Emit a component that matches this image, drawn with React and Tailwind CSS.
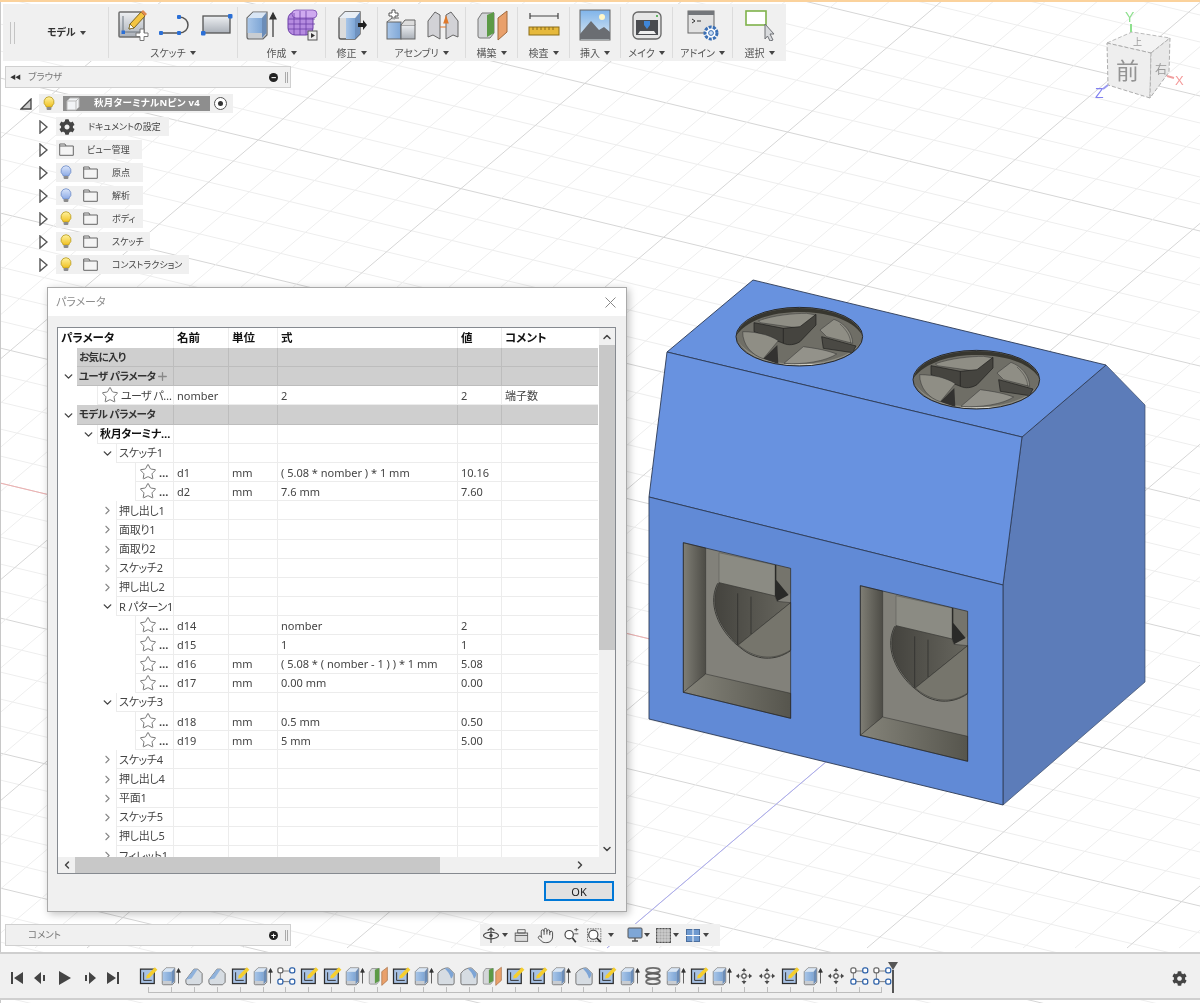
import React from "react";
import { ChevronDown, ChevronRight, ChevronLeft, ChevronUp, Star, Hand, Plus } from "lucide-react";
import { FaCog } from "react-icons/fa";

const Defs = () => (
  <svg className="absolute h-0 w-0">
    <defs>
      <linearGradient id="gBlue" x1="0" y1="0" x2="1" y2="0"><stop offset="0" stopColor="#a9c6e8" /><stop offset="1" stopColor="#7ea6d6" /></linearGradient>
      <linearGradient id="gGray" x1="0" y1="0" x2="0" y2="1"><stop offset="0" stopColor="#eef0f3" /><stop offset="1" stopColor="#aab0b8" /></linearGradient>
      <linearGradient id="gSky" x1="0" y1="0" x2="0" y2="1"><stop offset="0" stopColor="#7fb4ea" /><stop offset="1" stopColor="#dfeaf2" /></linearGradient>
      <linearGradient id="gWallL" x1="0" y1="0" x2="1" y2="0"><stop offset="0" stopColor="#7f7e75" /><stop offset="1" stopColor="#4d4c46" /></linearGradient>
      <linearGradient id="gFloor" x1="0" y1="0" x2="1" y2="0"><stop offset="0" stopColor="#85847a" /><stop offset="1" stopColor="#56554d" /></linearGradient>
      <linearGradient id="gDark" x1="0" y1="0" x2="1" y2="0"><stop offset="0" stopColor="#44433e" /><stop offset="1" stopColor="#67665e" /></linearGradient>
      <linearGradient id="gBulbY" x1="0" y1="0" x2="0" y2="1"><stop offset="0" stopColor="#fff3a0" /><stop offset="1" stopColor="#f0c020" /></linearGradient>
      <linearGradient id="gBulbB" x1="0" y1="0" x2="0" y2="1"><stop offset="0" stopColor="#dbe6fb" /><stop offset="1" stopColor="#8dabe6" /></linearGradient>
      <clipPath id="holeClip"><ellipse cx="418" cy="170" rx="188" ry="86" /></clipPath>
    </defs>
  </svg>
);

const gridA = Array.from({ length: 70 }, (_, i) => i - 30);
const gridB = Array.from({ length: 60 }, (_, i) => i - 30);

const Hole = () => (
  <g transform="translate(660 280) scale(.3333)">
    <ellipse cx="418" cy="170" rx="190" ry="88" fill="#6f6e66" />
    <g clipPath="url(#holeClip)">
      <path d="M232 178 C260 238 340 258 418 258 C500 258 590 232 604 178 C590 226 500 252 418 252 C340 252 260 230 232 178Z" fill="#8f8e84" />
      <path d="M370 254 C400 260 470 260 510 250 C470 254 410 256 370 254Z" fill="#dedcd2" stroke="#dedcd2" strokeWidth="3" />
      <path d="M226 170 C250 100 340 80 418 80 C500 80 590 105 610 170 C580 118 500 96 418 96 C340 96 262 118 226 170Z" fill="#37362f" />
      <path d="M296 122 C340 106 400 100 440 100 L468 105 L420 145 L300 128Z" fill="#8f8e85" stroke="#333" strokeWidth="1.5" />
      <path d="M282 128 L370 145 L420 140 L468 103 L468 135 L420 185 C405 195 385 197 370 190 L282 155Z" fill="#45443f" stroke="#1e1e1c" strokeWidth="2" />
      <path d="M370 145 V190" stroke="#1e1e1c" strokeWidth="2" />
      <path d="M480 150 L522 118 C555 130 578 160 578 190 L500 170Z" fill="#8f8e85" stroke="#333" strokeWidth="1.5" />
      <path d="M540 132 C560 150 572 170 572 190" fill="none" stroke="#3a3a36" strokeWidth="1.5" />
      <path d="M485 170 L588 198 L578 218 L490 205Z" fill="#4a4944" stroke="#1e1e1c" strokeWidth="2" />
      <path d="M248 155 C290 155 330 165 355 182 L310 236 C275 225 248 195 248 155Z" fill="#8f8e85" stroke="#333" strokeWidth="1.5" />
      <path d="M310 236 L352 195 L355 252Z" fill="#333230" />
      <path d="M372 250 L430 200 C470 205 505 212 530 222 C500 243 430 255 372 250Z" fill="#93928a" stroke="#333" strokeWidth="1.5" />
    </g>
    <ellipse cx="418" cy="170" rx="190" ry="88" fill="none" stroke="#26282c" strokeWidth="3" />
  </g>
);

const Win = () => (
  <g transform="translate(640 530) scale(.3333)">
    <path d="M130 38 L452 115 V565 L130 487Z" fill="#82817a" />
    <path d="M130 38 L197 54 V432 L130 487Z" fill="url(#gWallL)" stroke="#2d2d2a" strokeWidth="1.5" />
    <path d="M130 487 L197 432 L452 490 V565Z" fill="url(#gFloor)" stroke="#2d2d2a" strokeWidth="1.5" />
    <path d="M237 68 L405 105 V198 L237 158Z" fill="#8b8b83" stroke="#55554f" strokeWidth="1.5" />
    <path d="M405 105 V198 L411 212 L452 190 V115Z" fill="#75746c" />
    <path d="M405 105 H409 V150 L446 195 L411 214 L405 198Z" fill="#2a2a28" />
    <path d="M237 158 L405 198 L411 214 L452 218 L295 345 C250 305 200 230 237 158Z" fill="url(#gDark)" stroke="#2d2d2a" strokeWidth="1.5" />
    <path d="M295 345 L452 218 V360 C400 395 340 385 295 345Z" fill="#76756c" stroke="#2d2d2a" strokeWidth="1.5" />
    <path d="M293 190 V345 M333 200 V312" stroke="#2a2a28" strokeWidth="2" fill="none" />
    <path d="M233 160 C195 235 255 320 300 352 C345 392 405 395 452 362" stroke="#3a3a36" strokeWidth="3" fill="none" />
    <path d="M130 38 L452 115 V565 L130 487Z" fill="none" stroke="#22252b" strokeWidth="2" />
  </g>
);

const Scene = () => (
  <svg className="absolute inset-0 -z-10" width="1200" height="1003" viewBox="0 0 1200 1003">
    {gridA.map((k) => {
      const y0 = 483 + k * 27;
      return <line key={"a" + k} x1="0" y1={y0} x2="1200" y2={y0 + 288} stroke={k % 5 === 0 ? "#d6d6d6" : "#eeeeee"} strokeWidth="1" />;
    })}
    {gridB.map((k) => {
      const x0 = 607 + k * 52;
      return <line key={"b" + k} x1={x0} y1="948" x2={x0 + 1116} y2="0" stroke={k % 5 === 0 ? "#d6d6d6" : "#eeeeee"} strokeWidth="1" />;
    })}
    <line x1="0" y1="483" x2="900" y2="699" stroke="#efb0b0" />
    <line x1="607" y1="948" x2="900" y2="699" stroke="#aaaaf0" />
    <line x1=".5" y1="0" x2=".5" y2="1003" stroke="#c8c8c8" />
    <path d="M1022 437 L1106 365 L1145 405 V682 L1003 805 V585Z" fill="#5c7cb9" stroke="#3a4a68" strokeWidth=".7" />
    <path d="M753 280 L1106 365 L1022 437 L667 352Z" fill="#6892df" stroke="#2c3a55" strokeWidth=".9" />
    <path d="M667 352 L1022 437 L1003 585 L649 497Z" fill="#6892e0" stroke="#2c3a55" strokeWidth=".9" />
    <path d="M649 497 L1003 585 V805 L649 719Z" fill="#618ad6" stroke="#2c3a55" strokeWidth=".9" />
    <Hole />
    <g transform="translate(177 43)"><Hole /></g>
    <Win />
    <g transform="translate(177 43)"><Win /></g>
    <g>
      <path d="M1107 43 L1132 32 L1170 38 L1151 53Z" fill="#f3f3f3" stroke="#bbbbbb" strokeDasharray="4 2" />
      <path d="M1107 43 L1151 53 L1150 98 L1108 85Z" fill="#eeeeee" stroke="#adadad" strokeDasharray="4 2" />
      <path d="M1151 53 L1170 38 L1169 72 L1150 98Z" fill="#e9e9e9" stroke="#adadad" strokeDasharray="4 2" />
      <line x1="1131" y1="32" x2="1131" y2="24" stroke="#8ee08e" strokeWidth="2" />
      <line x1="1167" y1="76" x2="1174" y2="78" stroke="#f0a0a0" strokeWidth="2" />
      <line x1="1108" y1="85" x2="1103" y2="89" stroke="#9a9af0" strokeWidth="2" />
      <text x="1125" y="22" fontSize="14" fill="#8ee08e" fontFamily="Liberation Sans">Y</text>
      <text x="1175" y="85" fontSize="13" fill="#f59a9a" fontFamily="Liberation Sans">X</text>
      <text x="1095" y="98" fontSize="14" fill="#8080f0" fontFamily="Liberation Sans">Z</text>
      <text x="1116" y="79" fontSize="23" fill="#949494" fontFamily="Noto Sans CJK JP">前</text>
      <text x="1155" y="74" fontSize="12" fill="#9a9a9a" fontFamily="Noto Sans CJK JP">右</text>
      <text x="1133" y="45" fontSize="9" fill="#9a9a9a" fontFamily="Noto Sans CJK JP">上</text>
    </g>
  </svg>
);

const Ico = ({ s = 32, className = "", children }) => (
  <svg width={s} height={s} viewBox="0 0 32 32" className={"shrink-0 " + className}>{children}</svg>
);

const SketchNew = () => (
  <Ico>
    <rect x="2" y="3" width="25" height="25" rx="1" fill="url(#gGray)" stroke="#6d6d6d" strokeWidth="1.5" />
    <path d="M6 7 V23 H24" fill="none" stroke="#6d7680" strokeWidth="1" />
    <rect x="4.5" y="21.5" width="3.5" height="3.5" fill="#2a6fd6" />
    <path d="M12 20 L13 15 L24 3 L28 7 L17 19Z" fill="#f4c542" stroke="#7a6420" strokeWidth="1" />
    <path d="M12 20 L13 15 L17 19Z" fill="#fff" stroke="#7a6420" strokeWidth=".8" />
    <path d="M24 3 L28 7 L30 5 L26 1Z" fill="#e08a50" />
    <path d="M23 20 h4 v4 h4 v3.5 h-4 v4 h-4 v-4 h-4 v-3.5 h4Z" fill="#fff" stroke="#777" strokeWidth="1" />
  </Ico>
);
const ArcLine = () => (
  <Ico>
    <path d="M2 24 H20 M20 8 C32 8 32 24 20 24" fill="none" stroke="#555" strokeWidth="1.5" />
    <rect x="0" y="22" width="4" height="4" rx="1" fill="#2a6fd6" /><rect x="18" y="22" width="4" height="4" rx="1" fill="#2a6fd6" /><rect x="18" y="6" width="4" height="4" rx="1" fill="#2a6fd6" />
  </Ico>
);
const RectIcon = () => (
  <Ico>
    <rect x="2" y="7" width="27" height="17" fill="url(#gGray)" stroke="#555" strokeWidth="1.3" />
    <rect x="0" y="22" width="4.5" height="4.5" rx="1" fill="#2a6fd6" /><rect x="27" y="5" width="4.5" height="4.5" rx="1" fill="#2a6fd6" />
  </Ico>
);
const Extrude = ({ s = 32 }) => (
  <Ico s={s}>
    <path d="M2 9 L8 3 H22 V26 L18 30 H4 Q2 30 2 28Z" fill="#c9cdd2" stroke="#666" strokeWidth="1.2" />
    <path d="M2.6 9 H17 V24 H2.6Z" fill="url(#gBlue)" />
    <path d="M2.6 9 L8 3.6 H21.5 L17 9Z" fill="#d9e6f5" />
    <path d="M17 9 L21.5 3.6 V24 L17 29Z" fill="#6c8db8" />
    <path d="M28 28 V6 M25 10 L28 4 L31 10Z" stroke="#333" strokeWidth="1.2" fill="#333" />
  </Ico>
);
const Form = () => (
  <Ico>
    <rect x="1" y="3" width="25" height="23" rx="7" fill="#b58be0" stroke="#6d3fa8" />
    <rect x="5" y="1" width="25" height="8" rx="4" fill="#cfaaf0" stroke="#6d3fa8" strokeWidth=".7" />
    <path d="M7 4 V26 M13 2 V26 M19 2 V26 M1 10 H28 M1 15 H28 M1 20 H26" stroke="#6d3fa8" strokeWidth=".8" />
    <rect x="21" y="22" width="9" height="9" fill="#eee" stroke="#555" />
    <path d="M24 24 L28 26.5 L24 29Z" fill="#333" />
  </Ico>
);
const Modify = () => (
  <Ico>
    <path d="M3 9 L9 3 H24 V25 L19 30 H5 Q3 30 3 28Z" fill="#dcdcdc" stroke="#555" strokeWidth="1.3" />
    <path d="M10 9 H19 V30 H10Z" fill="url(#gBlue)" />
    <path d="M19 9 L24 3 V25 L19 30Z" fill="#6f92bf" />
    <path d="M9 3 L3 9 H19 L24 3Z" fill="#e8eef5" />
    <path d="M22 14 H27 V11 L31 16 L27 21 V18 H22Z" fill="#222" />
  </Ico>
);
const Assembly = () => (
  <Ico>
    <path d="M7 1 h3 v3 h3 v3 h-3 v3 h-3 v-3 h-3 v-3 h3Z" fill="#fff" stroke="#555" />
    <rect x="2" y="13" width="14" height="17" fill="url(#gBlue)" stroke="#666" />
    <rect x="16" y="16" width="14" height="14" fill="url(#gGray)" stroke="#666" />
    <path d="M2 13 L7 9 H14 M16 16 L20 11 H30 V16" fill="#ddd" stroke="#666" />
  </Ico>
);
const Joint = () => (
  <Ico>
    <path d="M1 12 L8 3 L13 6 V30 L6 26 L1 28Z" fill="#d2d2d6" stroke="#666" />
    <path d="M31 12 L24 3 L19 6 V30 L26 26 L31 28Z" fill="#d2d2d6" stroke="#666" />
    <path d="M13 18 H19 M19 8 L17 14 H21Z" stroke="#e0792a" fill="#e0792a" strokeWidth="1.2" />
  </Ico>
);
const Construct = ({ s = 32 }) => (
  <Ico s={s}>
    <path d="M2 10 L6 4 H18 V24 L14 29 H4 Q2 29 2 27Z" fill="#d4d6d9" stroke="#777" />
    <path d="M11 6 L18 3 V24 L11 28Z" fill="#5c9a47" />
    <path d="M22 9 L31 2 V23 L22 31Z" fill="#e9a06b" stroke="#a0683c" />
  </Ico>
);
const Ruler = () => (
  <Ico>
    <path d="M2 7 H30 M2 4 V10 M30 4 V10" stroke="#444" strokeWidth="1.2" />
    <rect x="1" y="18" width="30" height="8" fill="#e6b93c" stroke="#8a6c18" />
    <path d="M5 18 v3 M9 18 v3 M13 18 v3 M17 18 v3 M21 18 v3 M25 18 v3" stroke="#8a6c18" />
  </Ico>
);
const Insert = () => (
  <Ico>
    <rect x="1" y="1" width="30" height="30" fill="url(#gSky)" stroke="#666" />
    <circle cx="23" cy="8" r="3" fill="#fff7c8" />
    <path d="M1 30 V25 L12 12 L20 21 L25 18 L31 23 V30Z" fill="#6a6d72" />
  </Ico>
);
const Make = () => (
  <Ico>
    <rect x="2" y="3" width="28" height="27" rx="5" fill="#e6e6e6" stroke="#666" strokeWidth="1.3" />
    <rect x="5" y="11" width="22" height="15" fill="#4a4c50" />
    <path d="M13 12 H19 V16 L16 20 L13 16Z" fill="#3f86d8" />
    <path d="M9 22 H23 L25 25 H7Z" fill="#eee" />
    <circle cx="26" cy="7" r="1" fill="#35a535" />
  </Ico>
);
const AddIn = () => (
  <Ico>
    <rect x="1" y="2" width="26" height="22" fill="#e2e2e2" stroke="#666" />
    <rect x="1" y="2" width="26" height="4" fill="#73767a" />
    <path d="M5 10 L8 12 L5 14 M10 12 H14" stroke="#333" fill="none" />
    <circle cx="24" cy="24" r="6" fill="#fff" stroke="#3a6fb5" strokeWidth="3" strokeDasharray="3 1.2" />
    <circle cx="24" cy="24" r="2.4" fill="#cfe0f5" stroke="#3a6fb5" />
  </Ico>
);
const Select = () => (
  <Ico>
    <rect x="2" y="2" width="20" height="14" fill="#fff" stroke="#7fb24a" strokeWidth="1.6" />
    <path d="M21 15 L30 25 H26 L29 31 L26 32 L23.5 27 L21 30Z" fill="#d8dadd" stroke="#6e7075" />
  </Ico>
);

const TSketch = () => (
  <Ico s={20}>
    <rect x="4" y="5" width="22" height="23" fill="#a8c2e4" stroke="#2c2c2c" strokeWidth="2" />
    <path d="M9 10 V23 H22" fill="none" stroke="#2c2c2c" strokeWidth="1.5" />
    <path d="M13 20 L14 15 L27 2 L31 6 L18 19Z" fill="#f6cf2e" />
  </Ico>
);
const TChamfer = () => (
  <Ico s={20}>
    <path d="M3 22 L16 5 H22 L29 12 V26 L25 30 H7 Q3 30 3 26Z" fill="#d6dce2" stroke="#707070" strokeWidth="1.5" />
    <path d="M3 22 L16 5 H22 L12 20Z" fill="#8fb2dc" />
  </Ico>
);
const TFillet = () => (
  <Ico s={20}>
    <path d="M3 12 C8 4 16 3 20 3 L29 12 V27 Q29 30 26 30 H6 Q3 30 3 27Z" fill="#d6dce2" stroke="#707070" strokeWidth="1.5" />
    <path d="M14 4 C18 3 22 4 28 12 C27 17 26 19 24 20 C22 12 18 8 14 4Z" fill="#7da5d6" />
  </Ico>
);
const TPattern = () => (
  <Ico s={20}>
    <path d="M9 8 H24 M9 25 H24 M7 10 V23" stroke="#777" strokeWidth="1.5" fill="none" />
    <rect x="3" y="3" width="8" height="8" rx="3" fill="#fff" stroke="#666" strokeWidth="2" />
    <rect x="22" y="3" width="8" height="8" rx="3" fill="#fff" stroke="#2a5fa8" strokeWidth="2" />
    <rect x="3" y="21" width="8" height="8" rx="3" fill="#fff" stroke="#2a5fa8" strokeWidth="2" />
    <rect x="22" y="21" width="8" height="8" rx="3" fill="#fff" stroke="#2a5fa8" strokeWidth="2" />
  </Ico>
);
const TMove = () => (
  <Ico s={20}>
    <circle cx="16" cy="16" r="3.5" fill="#fff" stroke="#555" strokeWidth="2" />
    <path d="M16 3 L12 8 H20Z M16 29 L12 24 H20Z M3 16 L8 12 V20Z M29 16 L24 12 V20Z" fill="#4a4a4a" />
    <path d="M16 8 V12 M16 20 V24 M8 16 H12 M20 16 H24" stroke="#555" strokeWidth="1.5" strokeDasharray="1.5 1" />
  </Ico>
);
const TCoil = () => (
  <Ico s={20}>
    <ellipse cx="16" cy="7" rx="11" ry="4" fill="none" stroke="#6e6e6e" strokeWidth="3" />
    <ellipse cx="16" cy="16" rx="11" ry="4" fill="none" stroke="#5e5e5e" strokeWidth="3" />
    <ellipse cx="16" cy="25" rx="11" ry="4" fill="none" stroke="#6e6e6e" strokeWidth="3" />
  </Ico>
);

const Caret = ({ m = "ml-[4px]" }) => <span className={"h-0 w-0 shrink-0 border-x-[3px] border-t-[4px] border-x-transparent border-t-[#444] " + m} />;

const groups = [
  { w: "w-[129px]", label: "スケッチ", gap: "gap-[10px] ml-[4px]", icons: [SketchNew, ArcLine, RectIcon] },
  { w: "w-[88px]", label: "作成", gap: "gap-[10px]", icons: [Extrude, Form] },
  { w: "w-[52px]", label: "修正", icons: [Modify] },
  { w: "w-[88px]", label: "アセンブリ", gap: "gap-[10px]", icons: [Assembly, Joint] },
  { w: "w-[52px]", label: "構築", icons: [Construct] },
  { w: "w-[52px]", label: "検査", icons: [Ruler] },
  { w: "w-[51px]", label: "挿入", icons: [Insert] },
  { w: "w-[52px]", label: "メイク", icons: [Make] },
  { w: "w-[60px]", label: "アドイン", icons: [AddIn] },
  { w: "w-[53px]", label: "選択", icons: [Select] },
];

const Toolbar = () => (
  <div className="ml-[3px] flex h-[57px] w-[783px] bg-[#f0f0f0]">
    <div className="my-[3px] flex w-[106px] items-center border-r border-[#dcdcdc]">
      <div className="ml-[7px] h-[22px] w-[5px] border-x border-[#c4c4c4]" />
      <span className="ml-[32px] text-[10px] font-bold text-[#333]">モデル</span>
      <Caret />
    </div>
    {groups.map((g, i) => (
      <div key={g.label} className={"my-[3px] flex flex-col items-center justify-between " + g.w + (i < groups.length - 1 ? " border-r border-[#dcdcdc]" : "")}>
        <div className={"mt-[2px] flex items-center " + (g.gap || "")}>
          {g.icons.map((Ic, k) => <Ic key={k} />)}
        </div>
        <div className="-mb-[1px] flex items-center whitespace-nowrap text-[10px] leading-[12px] text-[#555]">{g.label}<Caret /></div>
      </div>
    ))}
  </div>
);

const Panel = ({ label, sign, rewind }) => (
  <div className="ml-[5px] flex h-[22px] w-[286px] items-center border border-[#d0d0d0] bg-[#f0f0f0]">
    <span className="ml-[4px] w-[18px] text-[6px] tracking-[-1px] text-[#333]">{rewind ? "◀◀" : ""}</span>
    <span className="text-[9.5px] text-[#777]">{label}</span>
    <span className="ml-auto flex h-[9px] w-[9px] items-center justify-center rounded-full bg-[#222] text-[9px] font-bold leading-none text-white">{sign}</span>
    <span className="ml-[7px] mr-[2px] h-[11px] w-[3px] border-x border-[#aaa]" />
  </div>
);

const Bulb = ({ on = true }) => (
  <svg width="12" height="15" viewBox="0 0 12 15" className="shrink-0">
    <path d="M6 .7 A5.2 5.2 0 0 1 9 10 V11 H3 V10 A5.2 5.2 0 0 1 6 .7Z" fill={on ? "url(#gBulbY)" : "url(#gBulbB)"} stroke={on ? "#b89a20" : "#6d8cc8"} strokeWidth=".8" />
    <rect x="3.6" y="11" width="4.8" height="3" rx="1" fill="#8b8b8b" />
  </svg>
);
const Folder = () => (
  <svg width="15" height="13" viewBox="0 0 15 13" className="shrink-0">
    <path d="M.7 12.3 V1 H6 L7 3 H14.3 V12.3Z M.7 3 H7" fill="#f4f4f4" stroke="#666" strokeWidth="1" />
  </svg>
);
const Tri = () => (
  <svg width="9" height="14" viewBox="0 0 9 14" className="shrink-0">
    <path d="M1 1 L8 7 L1 13Z" fill="#fff" stroke="#555" strokeWidth="1.4" />
  </svg>
);

const treeRows = [
  { t: "ドキュメントの設定", w: "w-[113px]", kind: "gear" },
  { t: "ビュー管理", w: "w-[86px]", kind: "folder" },
  { t: "原点", w: "w-[87px]", on: false },
  { t: "解析", w: "w-[87px]", on: false },
  { t: "ボディ", w: "w-[87px]", on: true },
  { t: "スケッチ", w: "w-[94px]", on: true },
  { t: "コンストラクション", w: "w-[133px]", on: true },
];

const Tree = () => (
  <div className="mt-[6px] flex flex-col gap-[4px]">
    <div className="flex h-[19px] items-center">
      <svg width="12" height="12" viewBox="0 0 12 12" className="ml-[20px] shrink-0"><path d="M11 1 V11 H1Z" fill="#ccc" stroke="#444" strokeWidth="1.3" /></svg>
      <div className="ml-[7px] flex h-[19px] w-[194px] items-center bg-[#f0f0f0]">
        <span className="ml-[4px]"><Bulb /></span>
        <div className="ml-[8px] flex h-[15px] w-[147px] items-center bg-[#8e8e8e]">
          <svg width="14" height="14" viewBox="0 0 14 14" className="ml-[3px]"><path d="M1 4 L4 1 H13 V10 L10 13 H1Z" fill="#f2f4f6" stroke="#bbb" /><path d="M10 4 V13 M10 4 L13 1 M1 4 H10" stroke="#bbb" /></svg>
          <span className="ml-[14px] whitespace-nowrap text-[9.5px] font-bold tracking-[0.3px] text-white">秋月ターミナルNピン v4</span>
        </div>
        <span className="ml-[4px] flex h-[13px] w-[13px] items-center justify-center rounded-full border border-[#555] bg-white"><span className="h-[5px] w-[5px] rounded-full bg-[#333]" /></span>
      </div>
    </div>
    {treeRows.map((r) => (
      <div key={r.t} className="flex h-[19px] items-center pl-[39px]">
        <Tri />
        <div className={"ml-[8px] flex h-[19px] items-center whitespace-nowrap bg-[#f0f0f0] text-[9px] text-[#444] " + r.w}>
          {r.kind === "gear" && <><FaCog className="ml-[3px] shrink-0 text-[16px] text-[#444]" /><span className="ml-[13px]">{r.t}</span></>}
          {r.kind === "folder" && <><span className="ml-[3px]"><Folder /></span><span className="ml-[13px]">{r.t}</span></>}
          {!r.kind && <><span className="ml-[4px]"><Bulb on={r.on} /></span><span className="ml-[11px]"><Folder /></span><span className="ml-[14px]">{r.t}</span></>}
        </div>
      </div>
    ))}
  </div>
);

const rows = [
  { g: 1, label: "お気に入り" },
  { g: 1, label: "ユーザ パラメータ", open: 1, plus: 1 },
  { s: 97, star: 1, label: "ユーザ パ…", name: "nomber", expr: "2", val: "2", cm: "端子数" },
  { g: 1, label: "モデル パラメータ", open: 1 },
  { s: 97, label: "秋月ターミナ…", open: 1, bold: 1 },
  { s: 116, label: "スケッチ1", open: 1 },
  { s: 135, star: 1, label: "…", name: "d1", unit: "mm", expr: "( 5.08 * nomber ) * 1 mm", val: "10.16" },
  { s: 135, star: 1, label: "…", name: "d2", unit: "mm", expr: "7.6 mm", val: "7.60" },
  { s: 116, label: "押し出し1", open: 0 },
  { s: 116, label: "面取り1", open: 0 },
  { s: 116, label: "面取り2", open: 0 },
  { s: 116, label: "スケッチ2", open: 0 },
  { s: 116, label: "押し出し2", open: 0 },
  { s: 116, label: "R パターン1", open: 1 },
  { s: 135, star: 1, label: "…", name: "d14", expr: "nomber", val: "2" },
  { s: 135, star: 1, label: "…", name: "d15", expr: "1", val: "1" },
  { s: 135, star: 1, label: "…", name: "d16", unit: "mm", expr: "( 5.08 * ( nomber - 1 ) ) * 1 mm", val: "5.08" },
  { s: 135, star: 1, label: "…", name: "d17", unit: "mm", expr: "0.00 mm", val: "0.00" },
  { s: 116, label: "スケッチ3", open: 1 },
  { s: 135, star: 1, label: "…", name: "d18", unit: "mm", expr: "0.5 mm", val: "0.50" },
  { s: 135, star: 1, label: "…", name: "d19", unit: "mm", expr: "5 mm", val: "5.00" },
  { s: 116, label: "スケッチ4", open: 0 },
  { s: 116, label: "押し出し4", open: 0 },
  { s: 116, label: "平面1", open: 0 },
  { s: 116, label: "スケッチ5", open: 0 },
  { s: 116, label: "押し出し5", open: 0 },
  { s: 116, label: "フィレット1", open: 0 },
];

const cols = "grid grid-cols-[115px_55px_49px_180px_44px_97px]";

const Chev = ({ open }) => open === undefined ? null : open
  ? <ChevronDown size={13} strokeWidth={2.6} className="mr-[2px] text-[#444]" />
  : <ChevronRight size={13} strokeWidth={2} className="mr-[2px] text-[#888]" />;

const ParamRow = ({ r }) => {
  const start = r.g ? 77 : r.s;
  const line = r.g ? "border-[#bdbdbd] bg-[#cfcfcf]" : "border-[#ececec]";
  const cell = "border-l border-b pl-[3px] flex items-center whitespace-nowrap overflow-hidden " + line;
  const tracking = r.g ? "text-[10.5px] tracking-[-0.6px]" : r.star ? "tracking-[-0.6px]" : "tracking-[-0.3px]";
  return (
    <div className={cols + " h-[19.17px] text-[11px] leading-none text-[#444]"}>
      <div className="flex h-full">
        <div className="flex shrink-0 items-center justify-end" style={{ width: start - 58 }}><Chev open={r.open === undefined ? undefined : !!r.open} /></div>
        <div className={"flex min-w-0 flex-1 items-center overflow-hidden whitespace-nowrap border-b pl-[2px] " + (r.g ? "border-[#bdbdbd] bg-[#cfcfcf] font-bold text-[#333]" : "border-l border-[#ececec]") + (r.bold ? " font-bold text-[#111]" : "")}>
          {r.star ? <Star size={18} strokeWidth={1.2} className="ml-[1px] mr-[2px] shrink-0 text-[#666]" /> : null}
          <span className={tracking + (r.label === "…" ? " font-bold" : "")}>{r.label}</span>
          {r.plus ? <Plus size={13} strokeWidth={2.4} className="shrink-0 text-[#888]" /> : null}
        </div>
      </div>
      <div className={cell}>{r.name}</div>
      <div className={cell}>{r.unit}</div>
      <div className={cell}>{r.expr}</div>
      <div className={cell}>{r.val}</div>
      <div className={cell}>{r.cm}</div>
    </div>
  );
};

const Dialog = () => (
  <div className="relative ml-[47px] mt-[13px] flex h-[625px] w-[580px] flex-col border border-[#a9a9a9] bg-[#f0f0f0] shadow-[2px_2px_8px_rgba(0,0,0,0.25)]">
    <div className="flex h-[28px] items-center justify-between bg-white pl-[8px] pr-[10px]">
      <span className="text-[11px] text-[#8c8c8c]">パラメータ</span>
      <svg width="11" height="11" viewBox="0 0 11 11"><path d="M.5 .5 L10.5 10.5 M10.5 .5 L.5 10.5" stroke="#888" /></svg>
    </div>
    <div className="mx-[9px] mt-[11px] flex h-[547px] w-[559px] flex-col overflow-hidden border border-[#868a90] bg-white">
      <div className="flex min-h-0 flex-1">
        <div className="flex w-[541px] flex-col">
          <div className={cols + " h-[20px] shrink-0 text-[11.5px] font-bold text-[#111]"}>
            <div className="flex items-center pl-[3px]">パラメータ</div>
            <div className="flex items-center border-l border-[#ececec] pl-[3px]">名前</div>
            <div className="flex items-center border-l border-[#ececec] pl-[3px]">単位</div>
            <div className="flex items-center border-l border-[#ececec] pl-[3px]">式</div>
            <div className="flex items-center border-l border-[#ececec] pl-[3px]">値</div>
            <div className="flex items-center border-l border-[#ececec] pl-[3px]">コメント</div>
          </div>
          <div className="min-h-0 flex-1 overflow-hidden">
            {rows.map((r, i) => <ParamRow key={i} r={r} />)}
          </div>
        </div>
        <div className="flex w-[16px] flex-col bg-[#f0f0f0]">
          <div className="flex h-[17px] items-center justify-center"><ChevronUp size={12} strokeWidth={3} className="text-[#444]" /></div>
          <div className="h-[305px] bg-[#c8c8c8]" />
          <div className="flex-1" />
          <div className="flex h-[17px] items-center justify-center"><ChevronDown size={12} strokeWidth={3} className="text-[#444]" /></div>
        </div>
      </div>
      <div className="flex h-[16px] shrink-0 items-center bg-[#f0f0f0]">
        <div className="flex w-[17px] justify-center"><ChevronLeft size={12} strokeWidth={3} className="text-[#444]" /></div>
        <div className="h-full w-[365px] bg-[#c8c8c8]" />
        <div className="flex w-[146px] justify-end"><ChevronRight size={12} strokeWidth={3} className="text-[#444]" /></div>
      </div>
    </div>
    <div className="mr-[12px] mt-[7px] flex justify-end">
      <button className="h-[20px] w-[70px] border-2 border-[#0078d7] bg-[#e1e1e1] text-[11px] leading-none text-[#222]">OK</button>
    </div>
  </div>
);

const Mini = ({ children, className = "" }) => <svg width="20" height="17" viewBox="0 0 24 20" className={"shrink-0 " + className}>{children}</svg>;
const NavBar = () => (
  <div className="ml-[189px] flex h-[22px] w-[240px] items-center bg-[#f0f0f0] pl-px text-[#555]">
    <Mini><ellipse cx="12" cy="10" rx="9" ry="4" fill="none" stroke="#444" strokeWidth="1.3" /><path d="M12 1 V19 M8 4 L12 1 L16 4" stroke="#444" fill="none" strokeWidth="1.3" /><circle cx="12" cy="10" r="2" fill="#444" /></Mini>
    <Caret m="ml-[1px]" />
    <Mini className="ml-[3px]"><rect x="5" y="7" width="15" height="10" fill="#ddd" stroke="#555" /><path d="M5 10 H20 M8 3 H17 V7 H8Z" stroke="#555" fill="none" /></Mini>
    <Hand size={17} strokeWidth={1.3} className="ml-[6px] shrink-0 text-[#444]" />
    <Mini className="ml-[6px]"><circle cx="11" cy="9" r="5" fill="#fff" stroke="#444" strokeWidth="1.4" /><path d="M15 13 L19 18" stroke="#333" strokeWidth="2" /><path d="M17 3 H22 M19.5 1 V5 M17 8 H22" stroke="#444" /></Mini>
    <Mini className="ml-[5px]"><rect x="3" y="2" width="16" height="15" fill="none" stroke="#666" strokeDasharray="2 1" /><circle cx="10" cy="9" r="5.5" fill="#fff" stroke="#444" strokeWidth="1.4" /><path d="M14 13 L19 18" stroke="#333" strokeWidth="2" /></Mini>
    <Caret m="ml-[3px]" />
    <svg width="16" height="16" viewBox="0 0 16 16" className="ml-[13px] shrink-0"><rect x="1" y="1" width="14" height="10" rx="1" fill="#7ea6d6" stroke="#555" /><path d="M5 14 H11 M8 11 V14" stroke="#555" strokeWidth="1.4" /></svg>
    <Caret m="ml-[1px]" />
    <svg width="15" height="15" viewBox="0 0 15 15" className="ml-[6px] shrink-0"><rect x=".5" y=".5" width="14" height="14" fill="#aaa" stroke="#555" /><path d="M3 0 V15 M6 0 V15 M9 0 V15 M12 0 V15 M0 3 H15 M0 6 H15 M0 9 H15 M0 12 H15" stroke="#e6e6e6" strokeWidth=".6" /></svg>
    <Caret m="ml-[2px]" />
    <svg width="14" height="13" viewBox="0 0 14 13" className="ml-[7px] shrink-0"><rect x=".5" y=".5" width="13" height="12" fill="#6f9ad0" stroke="#4c6f9e" /><path d="M7 0 V13 M0 6.5 H14" stroke="#fff" /></svg>
    <Caret m="ml-[3px]" />
  </div>
);

const tl = [TSketch, Extrude, TChamfer, TChamfer, TSketch, Extrude, TPattern, TSketch, TSketch, Extrude, Construct, TSketch, Extrude, TFillet, TFillet, Construct, TSketch, TSketch, Extrude, TFillet, TSketch, Extrude, TCoil, Extrude, TSketch, Extrude, TMove, TMove, TSketch, Extrude, TMove, TPattern, TPattern];

const Play = ({ d }) => <svg width="16" height="16" viewBox="0 0 16 16" className="shrink-0"><path d={d} fill="#444" /></svg>;

const Timeline = () => (
  <div className="relative mt-[6px] flex h-[48px] items-center border-y-2 border-[#cfcfcf] bg-[#f0f0f0]">
    <div className="ml-[9px] mt-[4px] flex w-[120px] items-center gap-[8px]">
      <Play d="M2 2 H4 V14 H2Z M14 2 V14 L5 8Z" />
      <Play d="M1 8 L8 2 V14Z M10 5 H12 V11 H10Z" />
      <Play d="M2 1 L14 8 L2 15Z" />
      <Play d="M15 8 L8 2 V14Z M4 5 H6 V11 H4Z" />
      <Play d="M12 2 H14 V14 H12Z M2 2 V14 L11 8Z" />
    </div>
    <div className="ml-[8px] flex flex-col pt-[6px]">
      <div className="flex">
        {tl.map((Ic, i) => (
          <div key={i} className="flex w-[22.93px] flex-col items-center">
            <div className="flex h-[20px] w-[20px] items-center justify-center">{Ic === Extrude || Ic === Construct ? <Ic s={20} /> : <Ic />}</div>
            <div className="mt-[1px] h-[5px] w-px bg-[#bdbdbd]" />
          </div>
        ))}
      </div>
      <div className="mx-[11px] h-px bg-[#bdbdbd]" />
    </div>
    <div className="absolute left-[888px] top-[8px] flex flex-col items-center">
      <div className="h-0 w-0 border-x-[5px] border-t-[8px] border-x-transparent border-t-[#555]" />
      <div className="h-[23px] w-[2px] bg-[#555]" />
    </div>
    <FaCog className="ml-auto mr-[13px] mt-[5px] text-[15px] text-[#444]" />
  </div>
);

export default function App() {
  return (
    <div className="relative isolate flex h-[1003px] w-[1200px] flex-col overflow-hidden bg-white font-['Noto_Sans','Noto_Sans_CJK_JP',sans-serif] blur-[0.35px] [font-feature-settings:'palt']">
      <Defs />
      <Scene />
      <div className="h-[2px] bg-[#fbd29c]" />
      <div className="mt-[2px]"><Toolbar /></div>
      <div className="mt-[5px]"><Panel label="ブラウザ" sign="−" rewind /></div>
      <Tree />
      <Dialog />
      <div className="mt-[12px] flex">
        <Panel label="コメント" sign="+" />
        <NavBar />
      </div>
      <Timeline />
    </div>
  );
}
